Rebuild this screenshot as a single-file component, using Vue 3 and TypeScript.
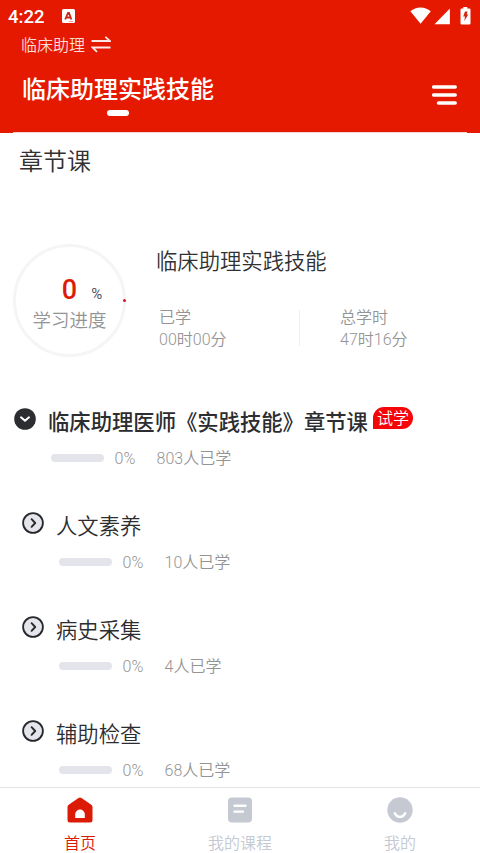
<script setup lang="ts">
interface Chapter {
  title: string
  percent: number
  learners: number
}

const course = {
  category: '临床助理',
  name: '临床助理实践技能',
  percent: 0,
  learned: '00时00分',
  total: '47时16分',
}

const root: Chapter = { title: '临床助理医师《实践技能》章节课', percent: 0, learners: 803 }

const chapters: Chapter[] = [
  { title: '人文素养', percent: 0, learners: 10 },
  { title: '病史采集', percent: 0, learners: 4 },
  { title: '辅助检查', percent: 0, learners: 68 },
]
</script>

<template>
  <div class="screen">
    <header class="header">
      <div class="status">
        <span class="clock">4:22</span>
        <svg class="app-badge" width="13" height="14" viewBox="0 0 13 14">
          <rect width="13" height="14" rx="1.5" fill="#fff" />
          <path d="M3.2 10.500 6 4h1L9.400 10.500M4.300 8.500h4" fill="none" stroke="#c92a1a" stroke-width="1.800" />
          <path d="M7 12.500h4" stroke="#e8a59c" stroke-width="1" />
        </svg>
        <svg class="system" width="62" height="20" viewBox="0 0 62 20">
          <path d="M.4 4.300C6-.9 15-.9 20.800 4.300L10.600 16.800Z" fill="#fff" />
          <path d="M39.900 1.500V17.300H24.500Z" fill="#fff" />
          <path d="M53.300 0h4v1.500h2a1.200 1.200 0 0 1 1.200 1.200v13.600a1.200 1.200 0 0 1-1.200 1.200h-7.600a1.200 1.200 0 0 1-1.200-1.200V2.700a1.200 1.200 0 0 1 1.200-1.200h1.600Z" fill="#fff" />
          <path d="M55 4.500h2.500L56.800 7.500h1.500L54.300 14l.7-4.500h-1.800Z" fill="#d32614" />
        </svg>
      </div>
      <div class="category">
        <span>{{ course.category }}</span>
        <svg width="20" height="17" viewBox="0 0 20 17" fill="none" stroke="#fff" stroke-opacity=".9" stroke-width="1.800">
          <path d="M.5 5H19L14.300 .8M19.500 11.500H1.500L6 15.800" />
        </svg>
      </div>
      <div class="course-row">
        <div class="course-tab">
          <h1>{{ course.name }}</h1>
          <i class="marker"></i>
        </div>
        <svg class="menu" width="26" height="22" viewBox="0 0 26 22" stroke="#fff" stroke-width="3.500" stroke-linecap="round">
          <path d="M1.700 3H23.200M1.700 11H23.200M6.500 19.100H23.200" />
        </svg>
      </div>
      <i class="sheet-edge"></i>
    </header>

    <main class="content">
      <h2 class="section-title">章节课</h2>

      <section class="summary">
        <div class="ring">
          <div class="ring-value"><b>{{ course.percent }}</b><span>%</span></div>
          <div class="ring-label">学习进度</div>
          <i class="ring-dot"></i>
        </div>
        <div class="summary-info">
          <h3>{{ course.name }}</h3>
          <div class="hours">
            <div class="hour learned"><span>已学</span><span>{{ course.learned }}</span></div>
            <div class="hour total"><span>总学时</span><span>{{ course.total }}</span></div>
          </div>
        </div>
      </section>

      <article class="chapter root">
        <svg class="toggle" width="22" height="22" viewBox="0 0 22 22">
          <circle cx="11" cy="11" r="10.800" fill="#2c2d30" />
          <path d="M7 9.300 11 12.800 15 9.300" fill="none" stroke="#fff" stroke-width="2" stroke-linecap="round" stroke-linejoin="round" />
        </svg>
        <div class="chapter-body">
          <div class="chapter-title"><h4>{{ root.title }}</h4><span class="trial">试学</span></div>
          <div class="progress">
            <div class="bar"><i :style="{ width: root.percent + '%' }"></i></div>
            <span class="percent">{{ root.percent }}%</span>
            <span>{{ root.learners }}人已学</span>
          </div>
        </div>
      </article>

      <article v-for="c in chapters" :key="c.title" class="chapter">
        <svg class="toggle" width="22" height="22" viewBox="0 0 22 22">
          <circle cx="11" cy="11" r="9.900" fill="#e5e6ec" stroke="#27282b" stroke-width="1.800" />
          <path d="M9.600 7.200 13.200 11 9.600 14.800" fill="none" stroke="#27282b" stroke-width="1.900" stroke-linecap="round" stroke-linejoin="round" />
        </svg>
        <div class="chapter-body">
          <div class="chapter-title"><h4>{{ c.title }}</h4></div>
          <div class="progress">
            <div class="bar"><i :style="{ width: c.percent + '%' }"></i></div>
            <span class="percent">{{ c.percent }}%</span>
            <span>{{ c.learners }}人已学</span>
          </div>
        </div>
      </article>
    </main>

    <nav class="tabs">
      <div class="tab active">
        <svg width="26" height="26" viewBox="0 0 26 26">
          <path d="M11.500 1Q13-.1 14.500 1L24.300 7.800Q25.500 8.700 25.500 10V23.200Q25.500 25.500 23.200 25.500H2.800Q.5 25.500.5 23.200V10Q.5 8.700 1.700 7.800Z" fill="currentColor" />
          <path d="M8.200 21V17.300a4.800 4.800 0 0 1 9.600 0V21Z" fill="#fff" />
        </svg>
        <span>首页</span>
      </div>
      <div class="tab">
        <svg width="26" height="26" viewBox="0 0 26 26">
          <rect x="1" y=".5" width="24" height="25" rx="4" fill="currentColor" />
          <path d="M7.500 8.800H18.500M7.500 14.600H16" stroke="#fff" stroke-width="2.400" stroke-linecap="round" />
        </svg>
        <span>我的课程</span>
      </div>
      <div class="tab">
        <svg width="26" height="26" viewBox="0 0 26 26">
          <circle cx="13" cy="13" r="12.700" fill="currentColor" />
          <path d="M7.800 16.300Q9.800 19.900 13 19.900T18.200 16.300" fill="none" stroke="#fff" stroke-width="2.400" stroke-linecap="round" />
        </svg>
        <span>我的</span>
      </div>
    </nav>
  </div>
</template>

<style>
body {
  margin: 0;
  background: #fff;
}
</style>

<style scoped>
.screen {
  display: flex;
  flex-direction: column;
  width: 480px;
  height: 853px;
  overflow: hidden;
  background: #fff;
  color: #303133;
  font-family: Roboto, "Noto Sans CJK SC", sans-serif;
  font-weight: 350;
}

h1, h2, h3, h4 {
  margin: 0;
  font-weight: 350;
}

span, h1, h2, h3, h4 {
  white-space: nowrap;
}

svg {
  display: block;
  flex: none;
}

.header {
  display: flex;
  flex-direction: column;
  flex: none;
  box-sizing: border-box;
  height: 133px;
  background: #e51900;
  color: #fff;
}

.status {
  display: flex;
  align-items: flex-start;
  height: 33px;
  padding: 7px 8px 0 8px;
  box-sizing: border-box;
}

.clock {
  width: 54px;
  font-size: 18.500px;
  font-weight: 500;
  line-height: 20px;
}

.app-badge {
  margin-top: 2px;
}

.system {
  margin-left: auto;
}

.category {
  display: flex;
  align-items: center;
  gap: 6px;
  height: 24px;
  padding-left: 21px;
  font-size: 16px;
  line-height: 24px;
  color: rgba(255, 255, 255, .85);
}

.category span {
  padding-top: 1px;
}

.category svg {
  margin-top: -1px;
}

.course-row {
  display: flex;
  justify-content: space-between;
  flex: 1;
  padding: 14px 22px 0 22px;
}

.course-tab {
  display: flex;
  flex-direction: column;
  align-items: center;
}

.course-tab h1 {
  padding-top: 2px;
  font-size: 24px;
  font-weight: 500;
  line-height: 34px;
}

.marker {
  width: 22px;
  height: 6px;
  margin-top: 3px;
  margin-right: 1px;
  border-radius: 3px;
  background: #fff;
}

.menu {
  margin-top: 13px;
}

.sheet-edge {
  height: 1px;
  margin: 0 13px;
  background: #f7d3ce;
}

.content {
  display: flex;
  flex-direction: column;
  flex: 1;
  min-height: 0;
  overflow: hidden;
}

.section-title {
  padding: 11px 0 0 19px;
  font-size: 24px;
  line-height: 36px;
}

.summary {
  display: flex;
  gap: 30px;
  margin-top: 64px;
  padding-left: 13px;
}

.ring {
  position: relative;
  display: flex;
  flex-direction: column;
  align-items: center;
  flex: none;
  box-sizing: border-box;
  width: 113px;
  height: 113px;
  padding-top: 28px;
  border: 3px solid #f5f5f6;
  border-radius: 50%;
}

.ring-value {
  display: flex;
  align-items: baseline;
  gap: 14px;
  padding-left: 25px;
  line-height: 30px;
}

.ring-value b {
  color: #dd1b06;
  font-size: 27px;
  font-weight: 500;
}

.ring-value span {
  margin-top: -1px;
  color: #515365;
  font-size: 15px;
  font-weight: 400;
}

.ring-label {
  margin-top: -1px;
  color: #949494;
  font-size: 18.500px;
  line-height: 26px;
}

.ring-dot {
  position: absolute;
  top: 52px;
  right: -3px;
  width: 3px;
  height: 3px;
  border-radius: 50%;
  background: #e51020;
}

.summary-info h3 {
  padding-top: 2px;
  font-size: 21.330px;
  line-height: 32px;
}

.hours {
  display: flex;
  margin-top: 29px;
  padding-left: 3px;
}

.hour {
  display: flex;
  flex-direction: column;
  color: #949494;
  font-size: 16px;
  line-height: 22px;
}

.learned {
  box-sizing: border-box;
  width: 141px;
  height: 36px;
  margin-top: 3px;
  border-right: 1px solid #eee;
}

.learned span:first-child {
  margin-top: -3px;
}

.total {
  padding-left: 40px;
}

.chapter {
  display: flex;
  flex: none;
  gap: 12px;
  height: 104px;
  padding-left: 22px;
}

.chapter.root {
  margin-top: 48px;
  padding-left: 14px;
}

.toggle {
  margin-top: 3px;
}

.chapter-title {
  display: flex;
  align-items: flex-start;
  gap: 5px;
}

.chapter h4 {
  padding-top: 2px;
  color: #2c2d30;
  font-size: 21.330px;
  line-height: 32px;
}

.chapter.root h4 {
  font-weight: 500;
}

.trial {
  box-sizing: border-box;
  width: 40px;
  height: 22px;
  margin-top: 2px;
  border-radius: 11px 11px 11px 0;
  background: #f50508;
  color: #fff;
  font-size: 16px;
  line-height: 24px;
  text-align: center;
}

.progress {
  display: flex;
  align-items: center;
  height: 24px;
  margin-top: 8px;
  padding-left: 3px;
  color: #949494;
  font-size: 16px;
  line-height: 24px;
}

.bar {
  width: 53px;
  height: 8px;
  margin-top: -2px;
  overflow: hidden;
  border-radius: 4px;
  background: #e4e5eb;
}

.bar i {
  display: block;
  height: 100%;
  background: #e51900;
}

.percent {
  width: 42px;
  margin-left: 10.500px;
}

.tabs {
  display: flex;
  flex: none;
  box-sizing: border-box;
  height: 66px;
  border-top: 1px solid #e2e3e4;
  background: #fff;
}

.tab {
  display: flex;
  flex: 1;
  flex-direction: column;
  align-items: center;
  gap: 9px;
  padding-top: 9px;
  color: #c5c9d2;
  font-size: 16px;
  line-height: 24px;
}

.tab.active {
  color: #db1b05;
}
</style>
